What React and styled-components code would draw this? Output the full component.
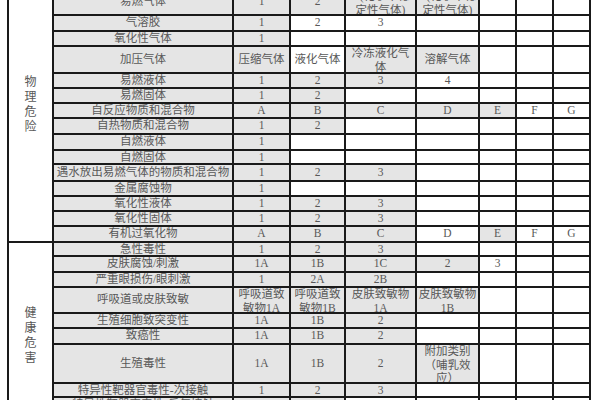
import React from 'react';
import styled, { createGlobalStyle } from 'styled-components';

const GlobalStyle = createGlobalStyle`
  html, body {
    margin: 0;
    padding: 0;
    background: #ffffff;
    overflow: hidden;
  }
`;

const Page = styled.div`
  width: 600px;
  height: 400px;
  overflow: hidden;
  padding-left: 7px;
  box-sizing: border-box;
  font-family: "Liberation Serif", "Noto Sans CJK SC", serif;
  color: #585858;
`;

const Table = styled.table`
  border-collapse: separate;
  border-spacing: 0;
  table-layout: fixed;
  width: 583px;
  margin-top: -31px;
  border-left: 2px solid #1a1a1a;
`;

const Cell = styled.td`
  padding: 0;
  border-bottom: 2px solid #1a1a1a;
  border-right: 2px solid #1a1a1a;
  background: ${props => (props.$shade ? '#e5e5e5' : '#ffffff')};
  vertical-align: middle;
`;

const Box = styled.div`
  height: ${props => props.$h}px;
  overflow: hidden;
  display: flex;
  flex-direction: column;
  justify-content: safe center;
  align-items: center;
  padding: 0 1.5px;
  font-size: 11.5px;
  line-height: 13.5px;
  text-align: center;
  line-break: strict;
`;

const GroupCell = styled.td`
  padding: 0;
  border-bottom: 2px solid #1a1a1a;
  border-right: 2px solid #1a1a1a;
  background: #ffffff;
  vertical-align: middle;
`;

const GroupLabel = styled.div`
  width: 1em;
  margin: 0 auto;
  font-size: 12px;
  line-height: 15px;
  text-align: center;
`;

const widths = [45, 180, 57, 55, 71, 63, 37, 37, 37];

// '!' in front of a value = cell without the grey shading
const physical = [
  ['爆炸物', 21, ['不稳定爆炸物', '1.1', '1.2', '1.3', '1.4', '1.5', '1.6']],
  ['易燃气体', 26, ['1', '2', 'A(化学不稳定性气体)', 'B(化学不稳定性气体)']],
  ['气溶胶', 16, ['1', '!2', '!3']],
  ['氧化性气体', 15, ['1']],
  ['加压气体', 27, ['压缩气体', '!液化气体', '冷冻液化气体', '溶解气体']],
  ['易燃液体', 15, ['1', '2', '3', '!4']],
  ['易燃固体', 15, ['1', '2']],
  ['自反应物质和混合物', 15, ['A', 'B', 'C', 'D', 'E', '!F', '!G']],
  ['自热物质和混合物', 16, ['1', '2']],
  ['自燃液体', 16, ['1']],
  ['自燃固体', 14, ['1']],
  ['遇水放出易燃气体的物质和混合物', 17, ['1', '2', '3']],
  ['金属腐蚀物', 15, ['1']],
  ['氧化性液体', 15, ['1', '2', '3']],
  ['氧化性固体', 15, ['1', '2', '3']],
  ['有机过氧化物', 16, ['A', 'B', 'C', '!D', 'E', '!F', '!G']],
];

const health = [
  ['急性毒性', 14, ['1', '2', '3']],
  ['皮肤腐蚀/刺激', 16, ['1A', '1B', '1C', '2', '!3']],
  ['严重眼损伤/眼刺激', 15, ['1', '2A', '2B']],
  ['呼吸道或皮肤致敏', 26, ['呼吸道致敏物1A', '呼吸道致敏物1B', '皮肤致敏物1A', '皮肤致敏物1B']],
  ['生殖细胞致突变性', 15, ['1A', '1B', '2']],
  ['致癌性', 16, ['1A', '1B', '2']],
  ['生殖毒性', 39, ['1A', '1B', '2', '附加类别（哺乳效应）']],
  ['特异性靶器官毒性-次接触', 14, ['1', '2', '3']],
  ['特异性靶器官毒性-反复接触', 16, ['1', '2']],
  ['吸入危害', 16, ['1', '2']],
];

const groups = [
  { label: '物理危险', rows: physical },
  { label: '健康危害', rows: health },
];

function HazardRow({ group, span, name, pitch, values }) {
  const h = pitch - 2;
  const cells = [];
  for (let i = 0; i < 7; i++) {
    const raw = values[i];
    const plain = raw && raw.startsWith('!');
    const text = raw ? raw.replace(/^!/, '') : '';
    cells.push(
      <Cell key={i} $shade={!!raw && !plain}>
        <Box $h={h}>{text}</Box>
      </Cell>
    );
  }
  return (
    <tr>
      {group && (
        <GroupCell rowSpan={span}>
          <GroupLabel>{group}</GroupLabel>
        </GroupCell>
      )}
      <Cell $shade>
        <Box $h={h}>{name}</Box>
      </Cell>
      {cells}
    </tr>
  );
}

export default function App() {
  return (
    <>
      <GlobalStyle />
      <Page>
        <Table>
          <colgroup>
            {widths.map((w, i) => (
              <col key={i} style={{ width: w }} />
            ))}
          </colgroup>
          <tbody>
            {groups.map(g =>
              g.rows.map(([name, pitch, values], i) => (
                <HazardRow
                  key={g.label + name}
                  group={i === 0 ? g.label : null}
                  span={g.rows.length}
                  name={name}
                  pitch={pitch}
                  values={values}
                />
              ))
            )}
          </tbody>
        </Table>
      </Page>
    </>
  );
}
